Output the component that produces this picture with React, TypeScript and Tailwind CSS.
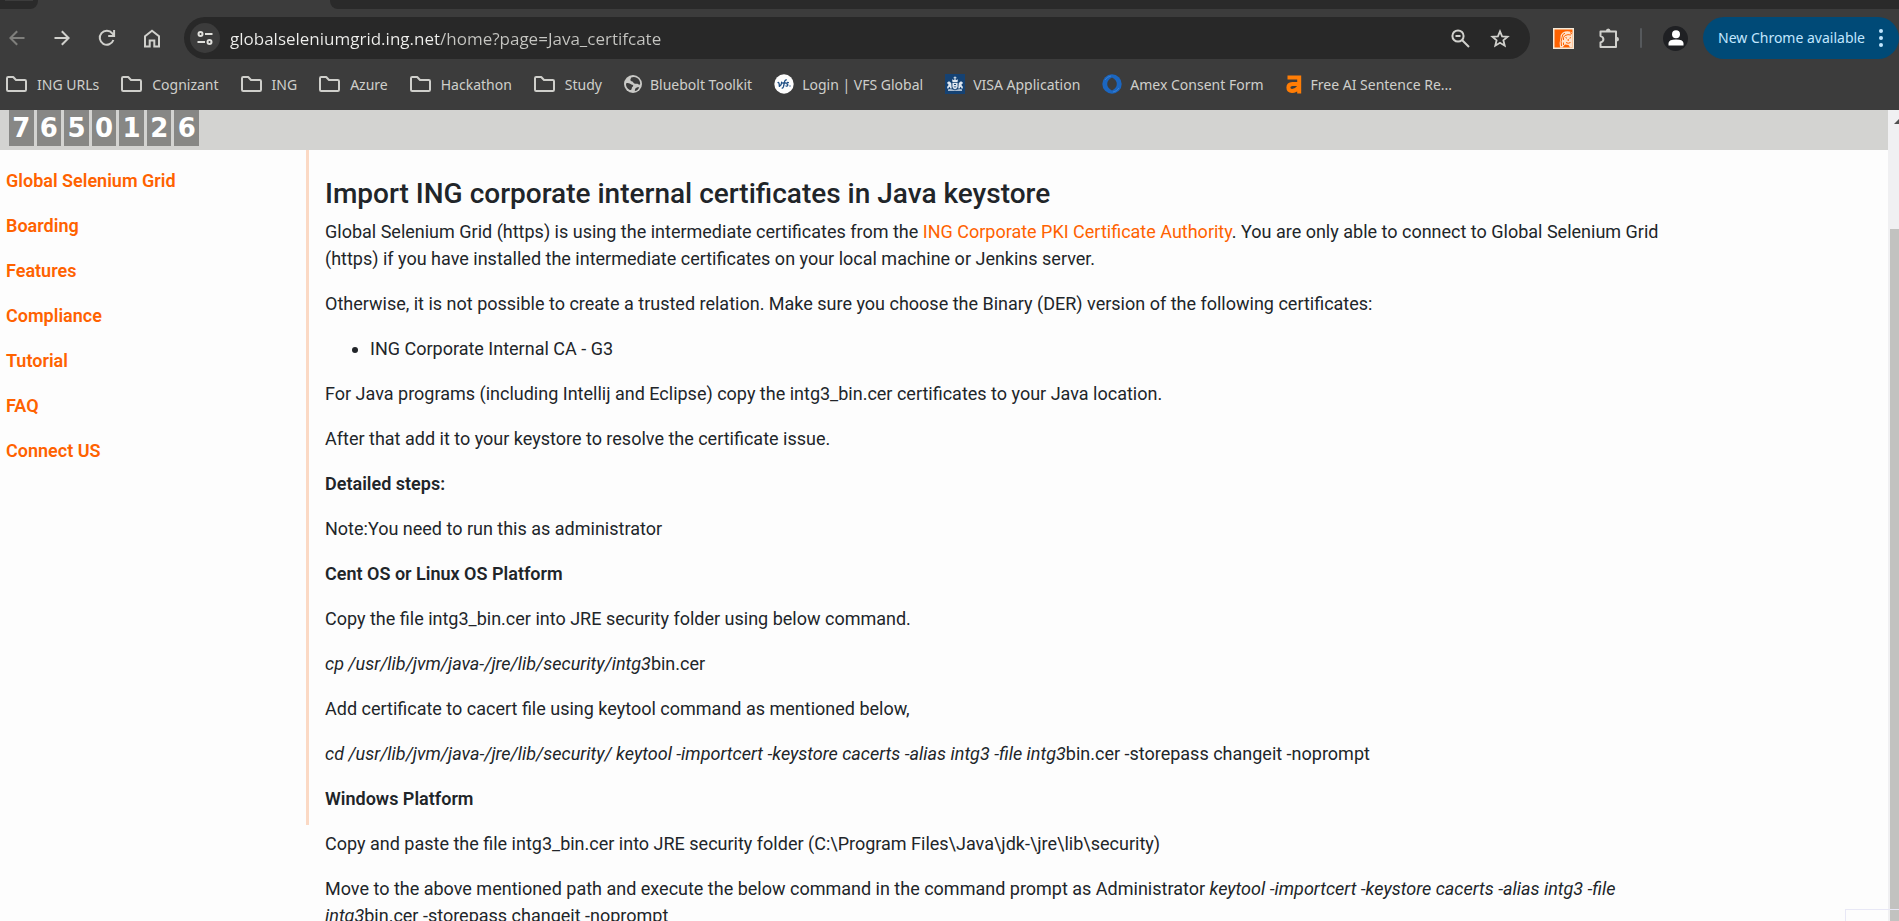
import type { ReactNode } from "react";

const VISITS = "7650126".split("");
const MENU = ["Global Selenium Grid", "Boarding", "Features", "Compliance", "Tutorial", "FAQ", "Connect US"];

const Folder = () => (
  <svg width="21" height="16" viewBox="0 0 21 16" fill="none" stroke="#cfcfcb" strokeWidth="2" strokeLinejoin="round">
    <path d="M1 2.2Q1 1 2.2 1H7.2L10 4H18.8Q20 4 20 5.2V13.8Q20 15 18.8 15H2.2Q1 15 1 13.8Z" />
  </svg>
);

const Globe = () => (
  <svg width="18" height="18" viewBox="0 0 18 18">
    <circle cx="9" cy="9" r="9" fill="#c9c9c6" />
    <path
      d="M2 9.500C2 8 3 7.800 4.600 8.200C6.200 8.600 6.800 9.400 8.400 9.800C9.600 10.200 9.400 11.200 8.600 11.800C7.600 12.400 8 13.600 7.400 14.400C6.800 15 6 15.200 5.400 14.800C3.400 13.600 2 11.600 2 9.500ZM7.200 2.600C8.600 2 11 1.800 12.600 2.800C15 4 16.200 6.400 16.200 8.800C16 10 14.800 9.800 14 9C13 8.200 11.600 9.200 10.400 8.600C9 7.800 9.600 6.800 8.400 6.400C7 6 6.200 5.600 6.400 4.400ZM10.800 16C11 14.600 11 13.400 12.400 12.800C13.600 12.200 14.600 12.400 15.200 12.400C14.400 14.400 12.800 15.600 10.800 16Z"
      fill="#3c3c3c"
    />
  </svg>
);

const Vfs = () => (
  <svg width="20" height="20" viewBox="0 0 20 20">
    <circle cx="10" cy="10" r="9.7" fill="#fdfdfd" />
    <g fill="none" stroke="#1f4f85" strokeWidth="1.3" strokeLinecap="round" strokeLinejoin="round">
      <path d="M4 8.6C5 8.2 5.2 9.4 5.4 12.4C6.8 11.4 7.8 9.8 7.6 8.2" />
      <path d="M12.4 5.8C10.4 5.6 10.4 7.6 10 10.4C9.7 12.6 9.4 14 8.2 14.2M8.6 9H11.6" />
      <path d="M14.4 8.6C12.8 8.2 12.2 9.6 13.2 10.2C14.4 10.8 13.8 12.6 12 12" />
    </g>
    <circle cx="16" cy="12" r="0.7" fill="#1f4f85" />
  </svg>
);

const Visa = () => (
  <svg width="20" height="20" viewBox="0 0 20 20">
    <rect width="20" height="20" fill="#154273" />
    <g fill="#dfe7f0">
      <path d="M9.500 2.400h1v.9h.9v.9h-.9v1.300h-1V4.200h-.9v-.9h.9z" />
      <path d="M7 5.200L8.400 6L10 5.200L11.600 6L13 5.200L12.500 8H7.500z" />
      <path d="M7.400 8.800h5.200v3.800Q12.600 14.600 10 15.400Q7.400 14.600 7.400 12.600z" />
      <path d="M2.200 8.400L4 7.200L5.400 8.200Q6.800 9.400 6.400 11.200L6.800 14.600H5.200L4.800 12.800Q3.400 13.400 3.600 14.600H2.200Q1.600 12.600 3.400 11.200Q3.800 10 2.200 9.600Z" />
      <path d="M17.800 8.400L16 7.200L14.600 8.200Q13.200 9.400 13.600 11.200L13.200 14.600H14.800L15.200 12.800Q16.600 13.400 16.400 14.600H17.800Q18.400 12.600 16.600 11.200Q16.200 10 17.800 9.600Z" />
      <path d="M3 15.500Q6 15 10 16.200Q14 15 17 15.500V16.700H3z" />
    </g>
    <path d="M9 10h2v1H9zM8.800 12.400h2.400v.9H8.800z" fill="#154273" />
  </svg>
);

const Amex = () => (
  <svg width="20" height="20" viewBox="0 0 20 20">
    <circle cx="10" cy="10" r="9.700" fill="#1b66c0" />
    <path d="M10 3.600C13 5 14.800 7.400 14.800 10S13 15 10 16.400C7 15 5.200 12.600 5.200 10S7 5 10 3.600Z" fill="#3c3c3c" />
    <path d="M3 6Q5 2.600 9 2M17 14Q15 17.400 11 18" fill="none" stroke="#3f86d8" strokeWidth="0.8" />
  </svg>
);

const Grammar = () => (
  <svg width="17" height="19" viewBox="0 0 17 19" fill="none">
    <path d="M1.500 2.400H13.200V18.500M13 9H6.400Q2.400 9.200 2.400 12.600Q2.400 16 6 16Q10 16 13 12" stroke="#ff7d05" strokeWidth="4" />
  </svg>
);

const BOOKMARKS: { label: string; icon: ReactNode; site?: boolean }[] = [
  { label: "ING URLs", icon: <Folder /> },
  { label: "Cognizant", icon: <Folder /> },
  { label: "ING", icon: <Folder /> },
  { label: "Azure", icon: <Folder /> },
  { label: "Hackathon", icon: <Folder /> },
  { label: "Study", icon: <Folder /> },
  { label: "Bluebolt Toolkit", icon: <Globe />, site: true },
  { label: "Login | VFS Global", icon: <Vfs />, site: true },
  { label: "VISA Application", icon: <Visa />, site: true },
  { label: "Amex Consent Form", icon: <Amex />, site: true },
  { label: "Free AI Sentence Re...", icon: <Grammar />, site: true },
];

function IconButton({ label, children }: { label: string; children: ReactNode }) {
  return (
    <button type="button" aria-label={label} className="flex size-5 shrink-0 items-center justify-center">
      {children}
    </button>
  );
}

function TabStrip() {
  return (
    <div className="flex h-[9px] shrink-0">
      <div className="w-[38px] rounded-br-lg bg-[#2a2a2a]">
        <div className="mx-[5px] h-px bg-[#3c3c3c]" />
      </div>
      <div className="w-[292px]" />
      <div className="flex-1 rounded-bl-lg bg-[#2a2a2a]" />
    </div>
  );
}

function Toolbar() {
  return (
    <div className="flex h-[58px] shrink-0 items-center">
      <nav aria-label="Browser" className="flex items-center gap-[25px] pl-[7px]">
        <IconButton label="Back">
          <svg width="16" height="16" viewBox="0 0 16 16" fill="none" stroke="#7f7f7c" strokeWidth="2">
            <path d="M15.500 8H2M8.200 1.200L1.400 8L8.200 14.800" />
          </svg>
        </IconButton>
        <IconButton label="Forward">
          <svg width="16" height="16" viewBox="0 0 16 16" fill="none" stroke="#d0d0cc" strokeWidth="2">
            <path d="M.5 8H14M7.800 1.200L14.600 8L7.800 14.800" />
          </svg>
        </IconButton>
        <IconButton label="Reload">
          <svg width="18" height="18" viewBox="0 0 18 18" fill="none" stroke="#d0d0cc" strokeWidth="2">
            <path d="M15.400 11A7 7 0 1 1 14.300 4.400L16 6.200M16.100 1V7H10.200" />
          </svg>
        </IconButton>
        <IconButton label="Home">
          <svg width="18" height="19" viewBox="0 0 18 19" fill="none" stroke="#d0d0cc" strokeWidth="2">
            <path d="M2 7.200L9 1.800L16 7.200V17.500H11.300V11.500H6.700V17.500H2Z" />
          </svg>
        </IconButton>
      </nav>
      <div className="ml-[22px] flex h-[42px] flex-1 items-center rounded-full bg-[#282828] pr-5 pl-1.5">
        <button type="button" aria-label="Site information" className="flex size-[30px] items-center justify-center rounded-full bg-[#3c3c3c]">
          <svg width="16" height="14" viewBox="0 0 16 14" fill="none" stroke="#e0e0dc" strokeWidth="2">
            <circle cx="3.500" cy="3" r="2" />
            <path d="M8 3H15.500M.5 11H8" />
            <circle cx="12.500" cy="11" r="2" />
          </svg>
        </button>
        <input
          aria-label="Address"
          readOnly
          value="globalseleniumgrid.ing.net/home?page=Java_certifcate"
          className="ml-[10px] h-9 min-w-0 flex-1 bg-[linear-gradient(90deg,#f0f0ee_210px,#c6c6c2_210px)] bg-clip-text font-['Open_Sans',sans-serif] text-[17px] text-transparent outline-none"
        />
        <div className="flex items-center gap-5">
          <IconButton label="Zoom">
            <svg width="19" height="19" viewBox="0 0 19 19" fill="none" stroke="#d0d0cc" strokeWidth="2">
              <circle cx="7" cy="7" r="5.600" />
              <path d="M4.500 7H9.500M11 11L18 18" />
            </svg>
          </IconButton>
          <IconButton label="Bookmark this page">
            <svg width="20" height="19" viewBox="0 0 20 19" fill="none" stroke="#d0d0cc" strokeWidth="1.800">
              <path d="M10 2.400L12.100 7.300L17.600 7.800L13.400 11.300L14.700 16.700L10 13.800L5.300 16.700L6.600 11.300L2.400 7.800L7.900 7.300Z" />
            </svg>
          </IconButton>
        </div>
      </div>
      <div className="flex items-center gap-[26px] pl-[23px]">
        <IconButton label="ING extension">
          <svg width="21" height="21" viewBox="0 0 21 21" className="shrink-0">
            <rect width="21" height="21" fill="#f4ead8" />
            <rect x="1.500" y="1.500" width="18" height="18" fill="#ff6200" />
            <path d="M7 19.500Q6 15 7.500 10Q7 5 12 3.500Q17 2.500 19.500 5V19.500H17L15.500 17L12 16.500L9.500 19.500Z" fill="#ffe3cc" />
            <path d="M8.500 18Q7.500 13 9 9.500Q9 6 12 5.200M10.500 12Q9.800 9 12 7.500Q15 6 18 7M10.500 14.500V17M12.500 9.500L14 10.200M16.500 10.200L18 9.500M15.200 11V13M13 14.500Q15.200 16 17.500 14.500M17 4.500L19 6" fill="none" stroke="#ff6200" strokeWidth="1" />
          </svg>
        </IconButton>
        <IconButton label="Extensions">
          <svg width="22" height="22" viewBox="0 0 22 22" fill="none" stroke="#d0d0cc" strokeWidth="2" strokeLinejoin="round" className="shrink-0">
            <path d="M2.500 4.500H18V20H2.500V15.400Q5.400 14.600 5.400 12.200Q5.400 9.900 2.500 9.100Z" />
            <path d="M7.800 4Q8 1.500 10.200 1.500Q12.400 1.500 12.600 4ZM18.500 9.800Q21 10 21 12.200Q21 14.400 18.500 14.600Z" fill="#d0d0cc" stroke="none" />
          </svg>
        </IconButton>
      </div>
      <div className="ml-[21px] h-5 w-0.5 rounded-full bg-[#56595c]" />
      <button type="button" aria-label="Profile" className="ml-[21px] flex size-[25px] items-center justify-center rounded-full bg-[#1f2023]">
        <svg width="16" height="16" viewBox="0 0 16 16" fill="#ffffff">
          <circle cx="8" cy="4.200" r="4" />
          <path d="M.5 15.500V13Q1 9.600 8 9.600T15.500 13V15.500Z" />
        </svg>
      </button>
      <button type="button" className="ml-[15px] flex h-[42px] w-[196px] items-center justify-between rounded-full bg-[#004a77] pr-4 pb-px pl-[15px] text-[14px] whitespace-nowrap text-[#c2e7ff]">
        New Chrome available
        <svg width="4" height="18" viewBox="0 0 4 18" fill="#c2e7ff">
          <circle cx="2" cy="2" r="2" />
          <circle cx="2" cy="9" r="2" />
          <circle cx="2" cy="16" r="2" />
        </svg>
      </button>
    </div>
  );
}

function BookmarksBar() {
  return (
    <nav aria-label="Bookmarks" className="flex h-[43px] shrink-0 items-center gap-[22px] pb-[9px] pl-[6px] text-[14px] text-[#cfcfcb]">
      {BOOKMARKS.map((b) => (
        <a key={b.label} href="#" className={b.site ? "flex items-center gap-2 whitespace-nowrap" : "flex items-center gap-2.5 whitespace-nowrap"}>
          {b.icon}
          <span>{b.label}</span>
        </a>
      ))}
    </nav>
  );
}

function Article() {
  return (
    <article className="flex min-w-0 flex-1 flex-col gap-[18px] pt-[26px] pr-[200px] pl-4 text-[18px] leading-[27px]">
      <div>
        <h2 className="mb-1.5 text-[28px] leading-[36px] font-medium">Import ING corporate internal certificates in Java keystore</h2>
        <p>
          Global Selenium Grid (https) is using the intermediate certificates from the{" "}
          <a href="#" className="text-[#ff6200]">ING Corporate PKI Certificate Authority</a>. You are only able to connect to
          Global Selenium Grid (https) if you have installed the intermediate certificates on your local machine or Jenkins server.
        </p>
      </div>
      <p>Otherwise, it is not possible to create a trusted relation. Make sure you choose the Binary (DER) version of the following certificates:</p>
      <ul className="list-disc pl-[45px]">
        <li>ING Corporate Internal CA - G3</li>
      </ul>
      <p>For Java programs (including Intellij and Eclipse) copy the intg3_bin.cer certificates to your Java location.</p>
      <p>After that add it to your keystore to resolve the certificate issue.</p>
      <p className="font-semibold">Detailed steps:</p>
      <p>Note:You need to run this as administrator</p>
      <p className="font-semibold">Cent OS or Linux OS Platform</p>
      <p>Copy the file intg3_bin.cer into JRE security folder using below command.</p>
      <p>
        <em>cp /usr/lib/jvm/java-/jre/lib/security/intg3</em>bin.cer
      </p>
      <p>Add certificate to cacert file using keytool command as mentioned below,</p>
      <p>
        <em>cd /usr/lib/jvm/java-/jre/lib/security/ keytool -importcert -keystore cacerts -alias intg3 -file intg3</em>bin.cer
        -storepass changeit -noprompt
      </p>
      <p className="font-semibold">Windows Platform</p>
      <p>Copy and paste the file intg3_bin.cer into JRE security folder (C:\Program Files\Java\jdk-\jre\lib\security)</p>
      <p>
        Move to the above mentioned path and execute the below command in the command prompt as Administrator{" "}
        <em>keytool -importcert -keystore cacerts -alias intg3 -file intg3</em>bin.cer -storepass changeit -noprompt
      </p>
    </article>
  );
}

export default function App() {
  return (
    <div className="relative flex h-screen flex-col overflow-hidden bg-[#fdfdfd] font-['Roboto',sans-serif] text-[#212529]">
      <header className="flex shrink-0 flex-col bg-[#3c3c3c] font-['Noto_Sans',sans-serif]">
        <TabStrip />
        <Toolbar />
        <BookmarksBar />
      </header>
      <div className="flex min-h-0 flex-1">
        <div className="flex min-w-0 flex-1 flex-col overflow-hidden">
          <div className="flex h-10 shrink-0 bg-[#d3d3d1] pl-[9px] font-['DejaVu_Sans',sans-serif] text-[26px] leading-9 font-bold text-white">
            <div className="flex h-9 w-[190px] gap-[3px]">
              {VISITS.map((d, i) => (
                <span key={i} className="flex-1 bg-[#878785] text-center">
                  {d}
                </span>
              ))}
            </div>
          </div>
          <div className="flex shrink-0 items-start">
            <nav aria-label="Sections" className="h-[675px] w-[309px] shrink-0 border-r-3 border-[#fbd9c4] pt-[17px] pl-[6px]">
              <ul className="flex flex-col gap-[18px] text-[18px] leading-[27px] font-semibold text-[#ff6200]">
                {MENU.map((m) => (
                  <li key={m}>
                    <a href="#">{m}</a>
                  </li>
                ))}
              </ul>
            </nav>
            <Article />
          </div>
        </div>
        <div className="flex w-[11px] shrink-0 flex-col bg-[#f0f0f2] pt-[9px] pl-0.5">
          <svg width="9" height="5" viewBox="0 0 9 5" className="mb-[105px] shrink-0">
            <path d="M4 5L9 0V5Z" fill="#505050" />
          </svg>
          <div className="flex-1 bg-[#c2c2c0]" />
        </div>
      </div>
      <div className="absolute right-0 bottom-0 h-3 w-[54px] border-t border-l border-[#e8e8f6]" />
    </div>
  );
}
